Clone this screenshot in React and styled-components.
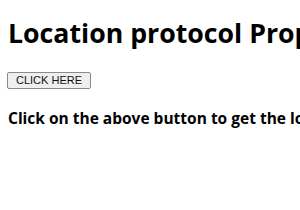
import React from "react";
import styled, { createGlobalStyle } from "styled-components";

const Global = createGlobalStyle`
  html, body { margin: 0; padding: 0; background: #fff; }
  body { font-family: "Open Sans", "DejaVu Sans", sans-serif; color: #000; overflow: hidden; }
`;

const Page = styled.div`
  padding: 14px 8px 0 8px;
  width: 700px;
`;

const Title = styled.h1`
  margin: 0;
  font-size: 26.7px;
  font-weight: 700;
  line-height: 38px;
  white-space: nowrap;
`;

const Button = styled.button`
  display: block;
  margin: 20px 0 0 -1px;
  height: 17px;
  font-family: "Liberation Sans", Arial, sans-serif;
  font-size: 11px;
  line-height: 13px;
  padding: 0 8px;
  background: #efefef;
  border: 1px solid #8a8a8a;
  border-radius: 2px;
  color: #111;
`;

const Message = styled.h4`
  margin: 19px 0 0 0;
  font-size: 15.5px;
  line-height: 21px;
  font-weight: 700;
  white-space: nowrap;
`;

export default function App() {
  return (
    <Page>
      <Global />
      <Title>Location protocol Property</Title>
      <Button>CLICK HERE</Button>
      <Message>Click on the above button to get the location protocol</Message>
    </Page>
  );
}
